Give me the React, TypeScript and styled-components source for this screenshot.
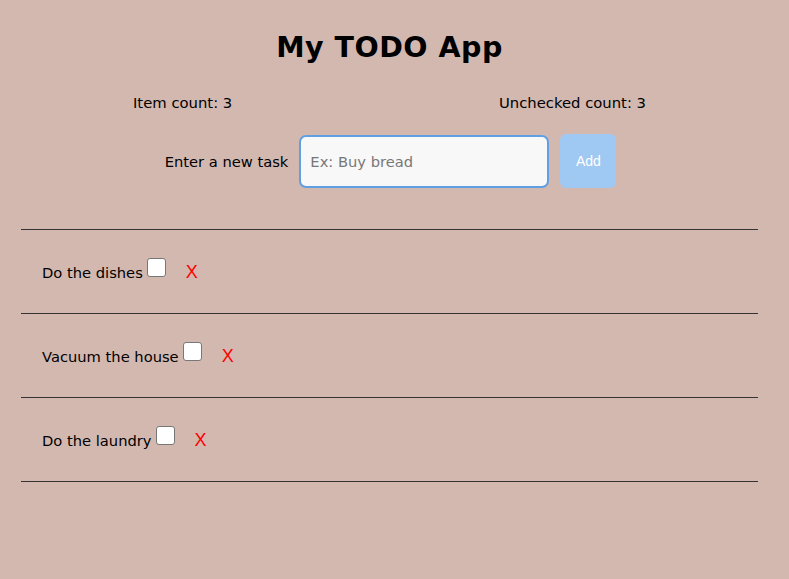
import React from "react";
import styled, { createGlobalStyle } from "styled-components";

const Global = createGlobalStyle`
  html, body { margin: 0; padding: 0; background: #d3b8b0; }
  body { font-family: "Comic Sans MS", "DejaVu Sans", sans-serif; color: #000; }
`;

const Page = styled.div`
  width: 789px;
  min-height: 579px;
  display: flex;
  flex-direction: column;
  box-sizing: border-box;
  padding: 28px 31px 0 21px;
`;

const Title = styled.h1`
  margin: 0;
  font-size: 28.5px;
  line-height: 40px;
  font-weight: bold;
  text-align: center;
  letter-spacing: 0.5px;
`;

const Counts = styled.div`
  display: flex;
  justify-content: space-between;
  padding: 0 112px 0 112px;
  margin-top: 25px;
  font-size: 14.8px;
  line-height: 20px;
`;

const Form = styled.div`
  display: flex;
  align-items: center;
  justify-content: center;
  margin-top: 21px;
  padding-left: 2px;
`;

const Label = styled.label`
  font-size: 14.7px;
  margin-right: 11px;
`;

const TaskInput = styled.input`
  width: 250px;
  height: 53px;
  box-sizing: border-box;
  border: 2px solid #5f9fe4;
  border-radius: 7px;
  background: #f8f8f8;
  padding: 0 9px;
  font-family: "Comic Sans MS", "DejaVu Sans", sans-serif;
  font-size: 14.7px;
  outline: none;
  &::placeholder { color: #777; }
`;

const AddButton = styled.button`
  width: 56px;
  height: 54px;
  margin-left: 11px;
  border: none;
  border-radius: 6px;
  background: #9fc8f2;
  color: #fff;
  font-family: "Liberation Sans", Arial, sans-serif;
  font-size: 14px;
`;

const List = styled.ul`
  list-style: none;
  margin: 41px 0 0 0;
  padding: 0;
  border-top: 1px solid #333;
`;

const Row = styled.li`
  height: 83px;
  border-bottom: 1px solid #333;
  display: flex;
  align-items: center;
  padding-left: 21px;
`;

const ItemText = styled.span`
  font-size: 14.7px;
  margin-top: 2px;
`;

const Check = styled.input`
  appearance: none;
  width: 19px;
  height: 19px;
  margin: 0 0 8px 4px;
  border: 1px solid #777;
  border-radius: 3px;
  background: #fff;
  box-sizing: border-box;
`;

const Remove = styled.button`
  border: none;
  background: none;
  padding: 0;
  margin: 0 0 0 20px;
  color: #ff0000;
  font-family: "Liberation Sans", Arial, sans-serif;
  font-size: 18px;
  line-height: 20px;
  cursor: pointer;
`;

const tasks = ["Do the dishes", "Vacuum the house", "Do the laundry"];

export default function App() {
  return (
    <>
      <Global />
      <Page>
        <Title>My TODO App</Title>
        <Counts>
          <span>Item count: 3</span>
          <span>Unchecked count: 3</span>
        </Counts>
        <Form>
          <Label htmlFor="task">Enter a new task</Label>
          <TaskInput id="task" placeholder="Ex: Buy bread" />
          <AddButton>Add</AddButton>
        </Form>
        <List>
          {tasks.map((t) => (
            <Row key={t}>
              <ItemText>{t}</ItemText>
              <Check type="checkbox" />
              <Remove>X</Remove>
            </Row>
          ))}
        </List>
      </Page>
    </>
  );
}
